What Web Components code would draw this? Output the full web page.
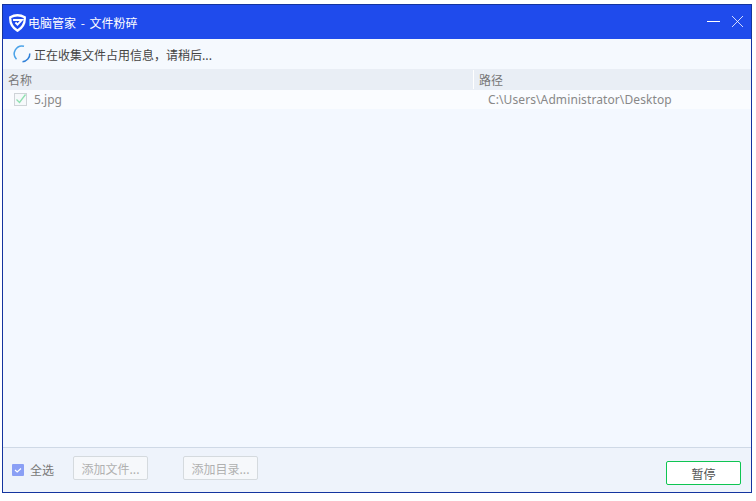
<!DOCTYPE html>
<html>
<head>
<meta charset="utf-8">
<style>
  html, body { margin: 0; height: 100%; background: #fff; }
  body { padding: 4px 4px 8px 2px; box-sizing: border-box; height: 501px; overflow: hidden;
    font-family: "Noto Sans CJK SC", "Noto Sans", sans-serif; font-size: 12px; }
</style>
</head>
<body>
<shred-window>
  <title-bar slot="title">电脑管家 - 文件粉碎</title-bar>
  <status-line slot="status">正在收集文件占用信息，请稍后...</status-line>
  <file-list slot="list">
    <file-row name="5.jpg" path="C:\Users\Administrator\Desktop"></file-row>
  </file-list>
  <foot-bar slot="foot"></foot-bar>
</shred-window>

<script>
class ShredWindow extends HTMLElement {
  connectedCallback() {
    const shadowRoot = this.attachShadow({ mode: 'open' });
    shadowRoot.innerHTML = `
      <style>
        :host { display: flex; flex-direction: column; height: 100%; box-sizing: border-box;
          border: 1px solid #14349f; background: #f3f8ff; }
        .list { flex: 1; display: flex; min-height: 0; }
        ::slotted(file-list) { flex: 1; }
      </style>
      <slot name="title"></slot>
      <slot name="status"></slot>
      <div class="list"><slot name="list"></slot></div>
      <slot name="foot"></slot>
    `;
  }
}

class TitleBar extends HTMLElement {
  connectedCallback() {
    const shadowRoot = this.attachShadow({ mode: 'open' });
    shadowRoot.innerHTML = `
      <style>
        :host { display: flex; align-items: center; height: 34px; background: #1f4bec; color: #fff;
          padding: 0 7px 0 6px; font-size: 12px; flex: none; }
        svg { display: block; flex: none; }
        .logo { margin-right: 2px; margin-top: 2px; }
        .txt { flex: 1; padding-top: 1px; word-spacing: 2px; }
        .ctl { display: flex; gap: 11px; align-items: center; margin-bottom: 2px; }
      </style>
      <svg class="logo" width="17" height="18" viewBox="0 0 18 19">
        <path d="M9 1.300C6.600 1.300 3.800 2 1.300 3.400 1 8.200 2.200 13.600 9 17.600c6.800-4 8-9.400 7.700-14.200C14.200 2 11.400 1.300 9 1.300z" fill="none" stroke="#fff" stroke-width="2.400"/>
        <path d="M4.300 6.300h9.400L9 11.200 6.800 9" fill="none" stroke="#fff" stroke-width="2"/>
      </svg>
      <span class="txt"><slot></slot></span>
      <div class="ctl">
        <svg width="13" height="13" viewBox="0 0 13 13"><path d="M0 6.500h13" stroke="#fff" stroke-width="1"/></svg>
        <svg width="13" height="13" viewBox="0 0 13 13"><path d="M1 1l11 11M12 1L1 12" stroke="#fff" stroke-width=".8"/></svg>
      </div>
    `;
  }
}

class StatusLine extends HTMLElement {
  connectedCallback() {
    const shadowRoot = this.attachShadow({ mode: 'open' });
    shadowRoot.innerHTML = `
      <style>
        :host { display: flex; align-items: center; height: 30px; padding-left: 10px; color: #444;
          flex: none; gap: 3px; background: #f5f9fe; }
        svg { display: block; flex: none; }
      </style>
      <svg width="18" height="18" viewBox="0 0 18 18" fill="none" stroke-width="1.500">
        <path d="M3.500 14.300A7.800 7.800 0 0 1 11 1.300" stroke="#4ba3e8"/>
        <path d="M16.800 8.500A7.800 7.800 0 0 1 9.500 16.700" stroke="#2f80d8"/>
      </svg>
      <span><slot></slot></span>
    `;
  }
}

class FileList extends HTMLElement {
  connectedCallback() {
    const shadowRoot = this.attachShadow({ mode: 'open' });
    shadowRoot.innerHTML = `
      <style>
        :host { display: block; background: #f3f8ff; min-width: 0; }
        .head { display: grid; grid-template-columns: 470px 1fr; height: 21px; background: #e9eef5;
          color: #777; align-items: center; }
        .head span { padding-left: 5px; }
        .head span + span { border-left: 1px solid #fff; height: 19px; line-height: 19px; padding-left: 5px; }
      </style>
      <div class="head"><span>名称</span><span>路径</span></div>
      <slot></slot>
    `;
  }
}

class FileRow extends HTMLElement {
  connectedCallback() {
    const nom = this.getAttribute('name');
    const chemin = this.getAttribute('path');
    const shadowRoot = this.attachShadow({ mode: 'open' });
    shadowRoot.innerHTML = `
      <style>
        :host { display: grid; grid-template-columns: 470px 1fr; height: 19px; background: #fafcff;
          color: #888; align-items: center; }
        .nom { display: flex; align-items: center; padding-left: 11px; gap: 7px; }
        .box { width: 11px; height: 11px; border: 1px solid #cfd4d8; background: #f6f9fb; position: relative; }
        svg { position: absolute; left: 0; top: -1px; }
        .chemin { padding-left: 15px; font-family: "Noto Sans", sans-serif; letter-spacing: .1px; }
        .fn { font-family: "Noto Sans", sans-serif; }
      </style>
      <div class="nom">
        <div class="box"><svg width="12" height="12" viewBox="0 0 12 12"><path d="M1.500 6.500l3 3 6-8" fill="none" stroke="#8fe0b0" stroke-width="1.300"/></svg></div>
        <span class="fn">${nom}</span>
      </div>
      <div class="chemin">${chemin}</div>
    `;
  }
}

class FootBar extends HTMLElement {
  connectedCallback() {
    const shadowRoot = this.attachShadow({ mode: 'open' });
    shadowRoot.innerHTML = `
      <style>
        :host { display: flex; align-items: center; height: 45px; border-top: 1px solid #cfd9e6;
          background: #eef3fb; flex: none; box-sizing: border-box; padding: 0 10px 0 9px; color: #777; position: relative; }
        .chk { width: 12px; height: 12px; background: #8a9ff5; border-radius: 1px; display: flex; margin-top: 4px; }
        .lbl { margin-left: 6px; margin-right: 19px; margin-top: 2px; }
        .btn { width: 75px; height: 24px; box-sizing: border-box; border: 1px solid #d5dade; border-radius: 2px;
          background: #f6f8fb; color: #b0b0b0; display: flex; align-items: center; justify-content: center; }
        .btn + .btn { margin-left: 35px; }
        .go { margin-left: auto; width: 75px; height: 24px; box-sizing: border-box; border: 1px solid #0fc552; border-radius: 2px;
          background: #fff; color: #555; display: flex; align-items: center; justify-content: center; align-self: flex-end; margin-bottom: 7px; }
        .row { display: flex; align-items: center; margin-bottom: 4px; }
      </style>
      <div class="row">
        <div class="chk"><svg width="12" height="12" viewBox="0 0 12 12"><path d="M3 6l2.200 2L9 4.500" fill="none" stroke="#fff" stroke-width="1.200"/></svg></div>
        <span class="lbl">全选</span>
        <div class="btn">添加文件...</div>
        <div class="btn">添加目录...</div>
      </div>
      <div class="go">暂停</div>
    `;
  }
}

customElements.define('shred-window', ShredWindow);
customElements.define('title-bar', TitleBar);
customElements.define('status-line', StatusLine);
customElements.define('file-list', FileList);
customElements.define('file-row', FileRow);
customElements.define('foot-bar', FootBar);
</script>
</body>
</html>
